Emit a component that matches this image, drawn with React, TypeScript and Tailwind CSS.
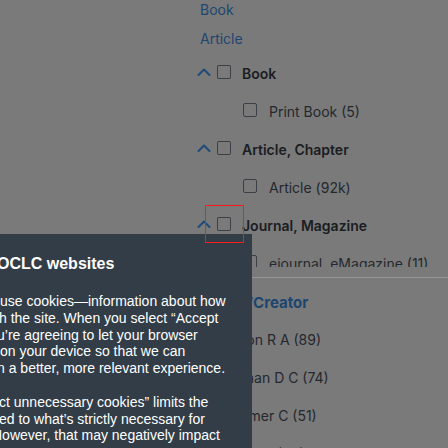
type Facet = {
  label: string;
  children: string[];
};

const facets: Facet[] = [
  { label: "Book", children: ["Print Book (5)"] },
  { label: "Article, Chapter", children: ["Article (92k)"] },
  { label: "Journal, Magazine", children: ["ejournal, eMagazine (11)"] },
];

const authors = ["Johnson R A (89)", "Goodman D C (74)", "Ostheimer C (51)", "Williams J (48)"];

// cookie banner runs off the left edge of the window, so only the tail of each line shows
const firstPara = [
  { text: "use cookies—information about how", offset: "ml-0" },
  { text: "h the site. When you select “Accept", offset: "ml-[-1px]" },
  { text: "u’re agreeing to let your browser", offset: "ml-[-3px]" },
  { text: "on your device so that we can", offset: "ml-0" },
  { text: "n a better, more relevant experience.", offset: "ml-[-3px]" },
];

const secondPara = [
  { text: "ct unnecessary cookies” limits the", offset: "ml-[-1px]" },
  { text: "ed to what’s strictly necessary for", offset: "ml-[-1px]" },
  { text: "However, that may negatively impact", offset: "ml-[-8px]" },
];

function Chevron() {
  return (
    <svg width="14" height="14" viewBox="0 0 14 14" fill="none" className="shrink-0">
      <path d="M1.5 10 L7 4.5 L12.5 10" stroke="#1d4a76" strokeWidth="2" strokeLinecap="round" strokeLinejoin="round" />
    </svg>
  );
}

function Checkbox() {
  return <span className="block h-[14px] w-[14px] shrink-0 rounded-[2px] border-[1.5px] border-[#3c3f45]" />;
}

function FacetGroup({ facet }: { facet: Facet }) {
  return (
    <div>
      <div className="flex h-[38px] items-center">
        <Chevron />
        <span className="ml-[6px]">
          <Checkbox />
        </span>
        <span className="ml-[11px] pt-[3px] text-[14px] font-semibold leading-[20px] text-[#1a1d22]">
          {facet.label}
        </span>
      </div>
      {facet.children.map((c) => (
        <div key={c} className="flex h-[38px] items-center pl-[46px]">
          <Checkbox />
          <span className="ml-[12px] pt-[3px] text-[14px] leading-[20px] text-[#24282e]">{c}</span>
        </div>
      ))}
    </div>
  );
}

function App() {
  return (
    <div className="relative h-[448px] w-[448px] overflow-hidden bg-[#7a7a7a] font-['Inter',sans-serif]">
      <div className="pl-[197px]">
        <div className="flex flex-col gap-[9px] pl-[3px] text-[14px] leading-[20px] text-[#1d466f]">
          <div>Book</div>
          <div>Article</div>
        </div>

        <div className="mt-[4px] h-[214px] overflow-hidden">
          {facets.map((f) => (
            <FacetGroup key={f.label} facet={f} />
          ))}
        </div>

        <div className="mt-[10px] border-t border-[#959595] pt-[15px]">
          <div className="text-[15px] font-bold leading-[20px] text-[#1d466f]">Author/Creator</div>
          <div className="mt-[8px]">
            {authors.map((a) => (
              <div key={a} className="flex h-[38px] items-center pl-[9px] text-[14px] leading-[20px] text-[#24282e]">
                {a}
              </div>
            ))}
          </div>
        </div>
      </div>

      <div className="absolute left-0 top-[234px] h-[214px] w-[252px] overflow-hidden bg-[#323d48] pt-[20px] font-['Liberation_Sans',Arial,sans-serif] text-white">
        <div className="ml-[-3px] whitespace-nowrap text-[16px] font-bold leading-[20px]">OCLC websites</div>
        <div className="mt-[19px] text-[14px] leading-[16.8px]">
          <div>
            {firstPara.map((l) => (
              <div key={l.text} className={`whitespace-nowrap ${l.offset}`}>
                {l.text}
              </div>
            ))}
          </div>
          <div className="mt-[16.8px]">
            {secondPara.map((l) => (
              <div key={l.text} className={`whitespace-nowrap ${l.offset}`}>
                {l.text}
              </div>
            ))}
          </div>
        </div>
      </div>

      <div className="absolute left-[205px] top-[205px] h-[38px] w-[39px] border border-[#ff1a1a]" />
    </div>
  );
}

export default App;
